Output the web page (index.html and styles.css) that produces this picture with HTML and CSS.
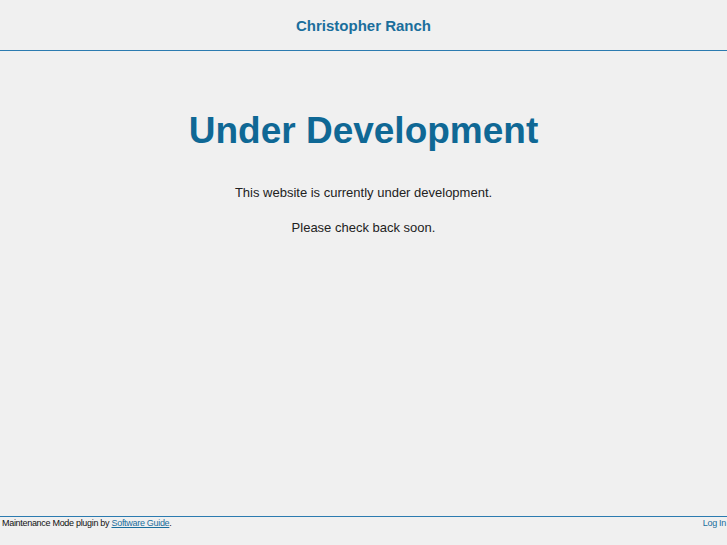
FILE: index.html
```html
<!DOCTYPE html>
<html>
<head>
<meta charset="utf-8">
<link rel="stylesheet" href="styles.css">
</head>
<body>
<div class="page">
  <header class="header">
    <div class="site-title">Christopher Ranch</div>
  </header>
  <main class="main">
    <h1 class="heading">Under Development</h1>
    <p class="msg">This website is currently under development.</p>
    <p class="msg">Please check back soon.</p>
  </main>
  <footer class="footer">
    <div class="credit">Maintenance Mode plugin by <a href="#">Software Guide</a>.</div>
    <a class="login" href="#">Log In</a>
  </footer>
</div>
</body>
</html>
```
FILE: styles.css
```css
html, body {
  margin: 0;
  padding: 0;
  background: #f0f0f0;
  font-family: "Liberation Sans", Arial, sans-serif;
  color: #222;
}
.page {
  height: 545px;
  display: flex;
  flex-direction: column;
}
.header {
  height: 50px;
  border-bottom: 1px solid #2b7bb0;
  display: flex;
  align-items: center;
  justify-content: center;
}
.site-title {
  font-size: 15px;
  font-weight: bold;
  color: #1a6e9c;
  margin-top: 1px;
}
.main {
  flex: 1;
  text-align: center;
}
.heading {
  margin: 58px 0 0;
  font-size: 37px;
  line-height: 44px;
  font-weight: bold;
  color: #0f6895;
}
.msg {
  margin: 0;
  font-size: 13px;
  line-height: 16px;
  color: #222;
}
.heading + .msg {
  margin-top: 32px;
}
.msg + .msg {
  margin-top: 19px;
}
.footer {
  height: 28px;
  border-top: 1px solid #2b7bb0;
  display: flex;
  justify-content: space-between;
  align-items: flex-start;
  font-size: 9px;
  line-height: 12px;
  padding: 0 1px 0 2px;
  letter-spacing: -0.3px;
}
.credit {
  color: #111;
}
.footer a {
  color: #1a6e9c;
}
.login {
  text-decoration: none;
}
```
